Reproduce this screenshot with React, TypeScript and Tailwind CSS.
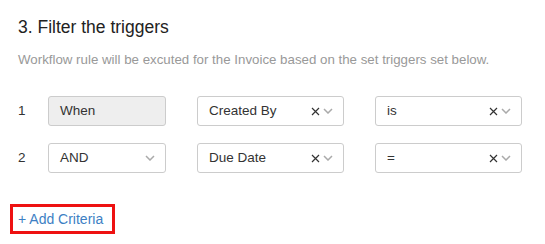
import React from "react";

const Chevron = () => (
  <svg width="10" height="6" viewBox="0 0 10 6" className="ml-[3px]">
    <path d="M1 1 L5 5 L9 1" fill="none" stroke="#aaaaaa" strokeWidth="1.5" />
  </svg>
);

const Cross = () => (
  <svg width="9" height="9" viewBox="0 0 9 9">
    <path d="M1 1 L8 8 M8 1 L1 8" stroke="#333333" strokeWidth="1.2" />
  </svg>
);

type SelectProps = {
  value: string;
  width: string;
  clearable?: boolean;
  disabled?: boolean;
};

const Select = ({ value, width, clearable, disabled }: SelectProps) => (
  <div
    className={`${width} ${
      disabled ? "bg-[#eeeeee]" : "bg-white"
    } flex h-[30px] items-center rounded-[3px] border border-[#cccccc] pl-[11px] pr-[10px] text-[13.5px] text-[#333333]`}
  >
    <span className="flex-1">{value}</span>
    {clearable && <Cross />}
    {!disabled && <Chevron />}
  </div>
);

const App = () => {
  return (
    <div
      className="h-[244px] w-[545px] bg-white pl-[18px] pt-[17px]"
      style={{ fontFamily: '"Liberation Sans", Arial, sans-serif' }}
    >
      <h1 className="text-[17.5px] leading-[20px] text-[#222222]">
        3. Filter the triggers
      </h1>
      <p className="mt-[14px] text-[13.3px] leading-[18px] text-[#999999]">
        Workflow rule will be excuted for the Invoice based on the set triggers
        set below.
      </p>

      {/* Criteria rows */}
      <div className="mt-[27px] flex flex-col gap-[17px]">
        <div className="flex items-center">
          <span className="w-[30px] text-[13.5px] text-[#333333]">1</span>
          <Select value="When" width="w-[118px]" disabled />
          <div className="w-[31px]" />
          <Select value="Created By" width="w-[147px]" clearable />
          <div className="w-[31px]" />
          <Select value="is" width="w-[147px]" clearable />
        </div>
        <div className="flex items-center">
          <span className="w-[30px] text-[13.5px] text-[#333333]">2</span>
          <Select value="AND" width="w-[118px]" />
          <div className="w-[31px]" />
          <Select value="Due Date" width="w-[147px]" clearable />
          <div className="w-[31px]" />
          <Select value="=" width="w-[147px]" clearable />
        </div>
      </div>

      <div className="-ml-[8px] mt-[31px] inline-flex h-[30px] items-center border-[3px] border-[#ee1111] pl-[5px] pr-[9px] text-[14px] text-[#3d7fc4]">
        + Add Criteria
      </div>
    </div>
  );
};

export default App;
